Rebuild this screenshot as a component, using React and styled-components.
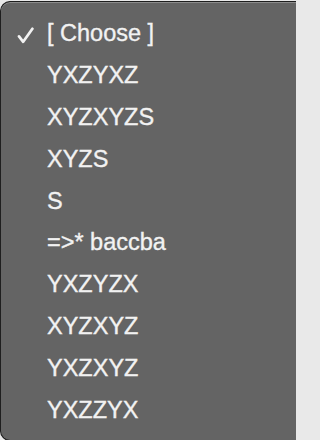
import React from 'react';
import styled, { createGlobalStyle } from 'styled-components';

const GlobalStyle = createGlobalStyle`
  html, body {
    margin: 0;
    padding: 0;
    background: #e9e9e9;
    overflow: hidden;
  }
`

const Page = styled.div`
  width: 296px;
  height: 440px;
  overflow: hidden;
  padding-top: 1px;
  box-sizing: border-box;
`

const Menu = styled.ul`
  list-style: none;
  margin: 0;
  width: 296px;
  height: 440px;
  box-sizing: border-box;
  padding: 11px 0 0 0;
  background: #646464;
  border: 1px solid #1e1e1e;
  border-right: none;
  border-radius: 10px 0 0 10px;
  box-shadow: inset 0 1px 0 #8c8c8c;
  font-family: 'Liberation Sans', Arial, sans-serif;
  font-size: 23.5px;
  color: #f2f2f2;
  -webkit-text-stroke: 0.35px #f2f2f2;
`

const Item = styled.li`
  display: flex;
  align-items: center;
  height: 41.9px;
  line-height: 41.9px;
  padding-left: 16px;
  white-space: nowrap;
`

const CheckSlot = styled.span`
  display: inline-flex;
  align-items: center;
  width: 30px;
  height: 100%;
  padding-top: 3px;
  box-sizing: border-box;
`

const Check = () => (
  <svg width="17" height="17" viewBox="0 0 17 17">
    <path d="M2 9.4 L6.2 14.8 L15.4 1.8" fill="none" stroke="#f2f2f2"
      strokeWidth="2.7" strokeLinecap="round" strokeLinejoin="round" />
  </svg>
)

const options = [
  '[ Choose ]',
  'YXZYXZ',
  'XYZXYZS',
  'XYZS',
  'S',
  '=>* baccba',
  'YXZYZX',
  'XYZXYZ',
  'YXZXYZ',
  'YXZZYX',
]

export default function App() {
  const selected = 0;

  return (
    <Page>
      <GlobalStyle />
      <Menu>
        {options.map((label, i) => (
          <Item key={i}>
            <CheckSlot>{i === selected ? <Check /> : null}</CheckSlot>
            {label}
          </Item>
        ))}
      </Menu>
    </Page>
  );
}
